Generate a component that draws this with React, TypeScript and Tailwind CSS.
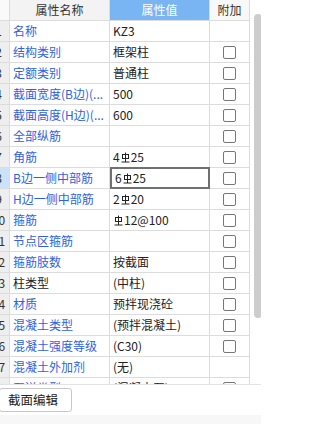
import React from "react";

const Rebar = () => (
  <svg width="9" height="11" viewBox="0 0 9 11" className="inline-block mx-[1px] align-[-1px]" fill="none" stroke="#222" strokeWidth="1">
    <path d="M4.5 0.5V10" />
    <rect x="1.5" y="2.5" width="6" height="4" />
    <path d="M0.5 10H8.5" />
  </svg>
);

type Row = { name: string; value: React.ReactNode; cb: boolean; black?: boolean };

const rows: Row[] = [
  { name: "名称", value: "KZ3", cb: false },
  { name: "结构类别", value: "框架柱", cb: true },
  { name: "定额类别", value: "普通柱", cb: true },
  { name: "截面宽度(B边)(...", value: "500", cb: true },
  { name: "截面高度(H边)(...", value: "600", cb: true },
  { name: "全部纵筋", value: "", cb: true },
  { name: "角筋", value: <>4<Rebar />25</>, cb: true },
  { name: "B边一侧中部筋", value: <>6<Rebar />25</>, cb: true },
  { name: "H边一侧中部筋", value: <>2<Rebar />20</>, cb: true },
  { name: "箍筋", value: <><Rebar />12@100</>, cb: true },
  { name: "节点区箍筋", value: "", cb: true },
  { name: "箍筋肢数", value: "按截面", cb: true },
  { name: "柱类型", value: "(中柱)", cb: true, black: true },
  { name: "材质", value: "预拌现浇砼", cb: true },
  { name: "混凝土类型", value: "(预拌混凝土)", cb: true },
  { name: "混凝土强度等级", value: "(C30)", cb: true },
  { name: "混凝土外加剂", value: "(无)", cb: false },
  { name: "泵送类型", value: "(混凝土泵)", cb: true },
];

export default function App() {
  return (
    <div
      className="w-[261px] h-[424px] bg-white flex flex-col overflow-hidden text-[12px] text-[#222]"
      style={{ fontFamily: '"Microsoft YaHei","Noto Sans CJK SC","Noto Sans",sans-serif' }}
    >
      <div className="h-[385px] flex overflow-hidden border-b border-[#e3e3e3] shrink-0">
        <div className="w-[250px] flex flex-col shrink-0 border-r border-[#dcdcdc]">
          <div className="flex h-[21px] shrink-0 border-b border-[#dcdcdc]">
            <div className="w-[10px] shrink-0 bg-[#fafafa] border-r border-[#dcdcdc]" />
            <div className="w-[100px] shrink-0 bg-[#f3f3f3] border-r border-[#dcdcdc] flex items-center justify-center text-[#333]">属性名称</div>
            <div className="w-[100px] shrink-0 bg-[#79b5f2] border-r border-[#dcdcdc] flex items-center justify-center text-white">属性值</div>
            <div className="flex-1 bg-[#f8f8f8] flex items-center justify-center text-[#333]">附加</div>
          </div>
          {rows.map((r, i) => {
            const sel = i === 7;
            return (
              <div key={i} className="flex h-[21px] shrink-0 border-b border-[#dcdcdc]">
                <div className={`w-[10px] shrink-0 overflow-hidden border-r border-[#dcdcdc] flex items-center ${sel ? "bg-[#cce2f8]" : "bg-[#eeeeee]"}`}>
                  <div className="-ml-[12px] w-[21px] shrink-0 text-center text-[#333]">{i + 1}</div>
                </div>
                <div className={`w-[100px] shrink-0 border-r border-[#dcdcdc] flex items-center pl-[3px] whitespace-nowrap overflow-hidden ${r.black ? "text-[#222]" : "text-[#2f62e0]"}`}>
                  {r.name}
                </div>
                <div className={`w-[100px] shrink-0 flex items-center pl-[3px] whitespace-nowrap overflow-hidden ${sel ? "border-2 border-[#707070] -my-[1px] h-[22px]" : "border-r border-[#dcdcdc]"}`}>
                  {r.value}
                </div>
                <div className="flex-1 flex items-center justify-center">
                  {r.cb && <div className="w-[13px] h-[13px] border border-[#777] rounded-[2px] bg-white" />}
                </div>
              </div>
            );
          })}
        </div>
        <div className="flex-1 bg-white pl-[4px] pt-[14px]">
          <div className="w-[8px] h-[304px] bg-[#cdcdcd] rounded-[4px]" />
        </div>
      </div>
      <div className="flex-1 flex flex-col">
        <div className="h-[30px] flex items-center shrink-0">
          <div className="-ml-[1px] w-[73px] h-[24px] border border-[#c8c8c8] rounded-[3px] bg-white flex items-center pl-[8px] text-[12.5px] text-[#222]">
            截面编辑
          </div>
        </div>
        <div className="flex-1 bg-[#f7f7f7]" />
      </div>
    </div>
  );
}
